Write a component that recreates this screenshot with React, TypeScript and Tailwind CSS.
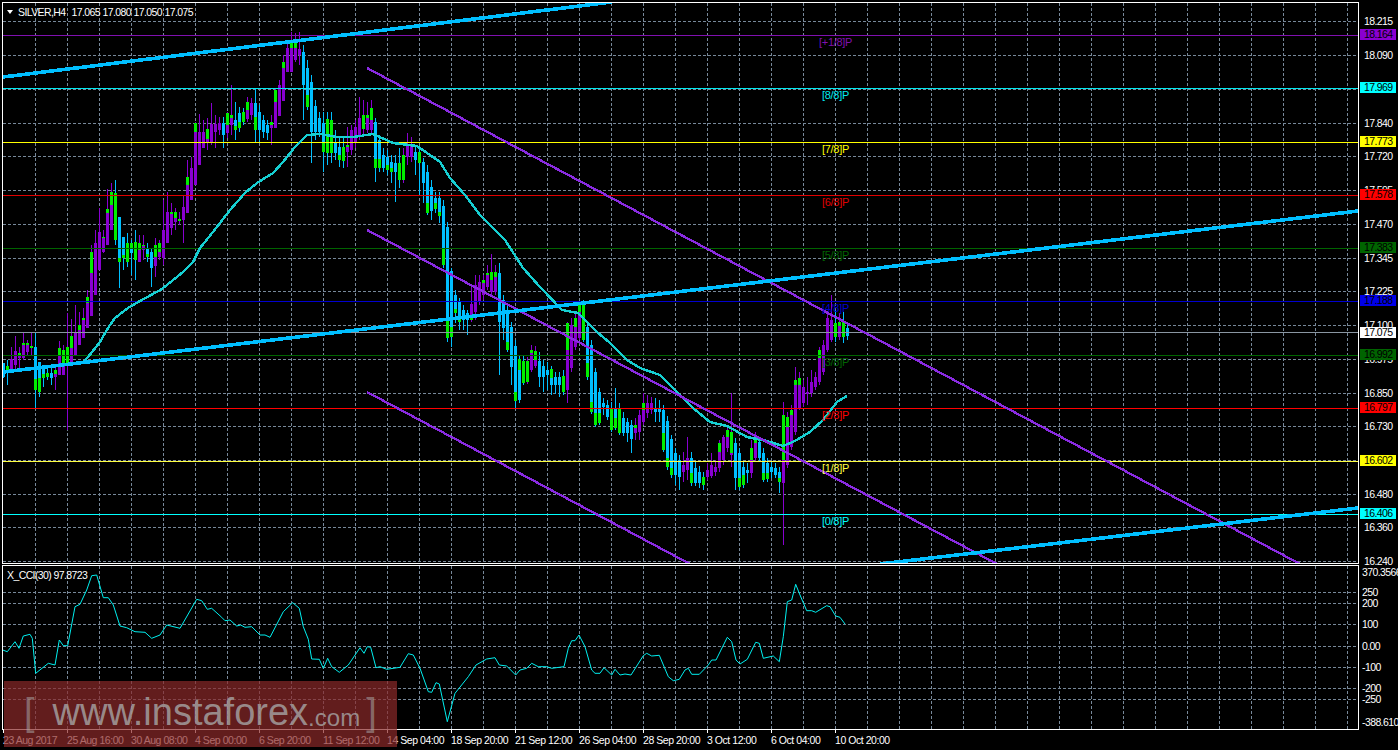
type Candle = [number, 'p' | 'b', number, number, number, number, number?, number?];

// x, colour, high, low, body top, body bottom, green top, green bottom (all in page pixels)
const CANDLES: Candle[] = [
  [3,'b',363,378,363,377],[7,'b',360,385,366,372,366,372],[11,'p',347,372,359,370],[15,'p',336,370,351,365],
  [19,'p',347,368,353,358,353,355],[23,'p',333,360,343,358,343,345],[27,'p',340,355,343,352,343,345],[31,'p',333,355,346,348,346,348],
  [35,'b',333,408,347,390,379,390],[39,'b',362,397,362,392,378,392],[43,'b',367,387,367,378,374,378],[47,'b',365,380,373,377,373,377],
  [51,'b',366,385,373,378],[55,'p',366,390,370,377,370,374],[59,'p',341,375,348,375,348,356],[63,'p',345,375,350,375,350,363],
  [67,'p',313,430,347,365,347,363],[71,'p',319,363,336,363,336,348],[75,'p',305,355,333,355],[79,'p',312,345,325,345,325,330],
  [83,'p',308,338,318,338,318,320],[87,'p',290,328,297,328,297,303],[91,'p',245,316,252,316,252,273],[95,'p',230,295,243,295],
  [99,'p',208,270,232,270],[103,'p',230,253,237,252,237,238],[107,'p',189,245,209,245,209,213],[111,'p',183,230,192,230,192,205],
  [115,'b',180,245,193,240,193,240],[119,'b',217,288,217,262,258,262],[123,'b',237,270,237,258,255,258],[127,'b',233,267,243,262,243,262],
  [131,'b',240,275,243,253,243,248],[135,'b',230,280,242,260,242,260],[139,'p',235,262,243,262,243,250],[143,'p',235,260,245,250,245,246],
  [147,'b',243,262,248,257,254,257],[151,'b',248,287,252,268],[155,'p',238,277,245,266,245,257],[159,'p',240,260,243,257,243,252],
  [163,'p',200,265,230,258],[167,'p',192,243,212,243],[171,'p',203,235,212,228,212,214],[175,'p',208,230,212,222,212,218],
  [179,'p',212,225,219,221,219,221],[183,'p',195,243,207,220],[187,'p',160,213,177,213,177,185],[191,'p',157,200,168,200],
  [195,'p',122,185,123,185,123,132],[199,'p',114,165,132,165],[203,'p',120,148,132,148],[207,'p',118,150,129,142,129,139],
  [211,'p',103,145,124,142],[215,'p',115,148,124,132],[219,'p',117,135,123,130],[223,'b',117,148,123,135],
  [227,'p',112,138,113,133,113,125],[231,'p',85,135,115,125,115,118],[235,'b',102,140,120,130,126,130],[239,'b',107,132,113,128,122,128],
  [243,'b',108,125,112,122,112,122],[247,'p',97,122,102,119,102,110],[251,'p',98,120,103,115],[255,'b',88,142,103,130,117,130],
  [259,'b',105,142,112,130],[263,'b',115,138,120,132],[267,'b',120,140,125,133],[271,'p',115,145,122,128,122,125],
  [275,'p',88,128,90,128,90,102],[279,'p',80,116,85,116],[283,'p',55,101,62,101,62,68],[287,'p',40,72,48,72],
  [291,'p',32,72,40,72,40,48],[295,'p',33,62,40,60,40,48],[299,'p',32,65,49,55],[303,'b',45,120,52,85],
  [307,'b',60,110,68,107,95,107],[311,'b',75,163,82,132],[315,'b',100,140,106,132],[319,'b',112,137,118,132],
  [323,'b',112,172,123,152,143,152],[327,'b',112,165,119,153,119,153],[331,'b',112,163,120,153,120,153],[335,'b',130,160,142,153],
  [339,'b',138,167,147,160,155,160],[343,'b',138,168,147,161,147,161],[347,'p',127,167,145,152,145,147],[351,'p',125,155,130,150],
  [355,'p',120,148,127,143],[359,'p',97,140,118,135],[363,'p',100,135,115,129,115,129],[367,'p',102,133,115,130,115,118],
  [371,'p',100,133,108,130,108,120],[375,'b',118,182,122,168,159,168],[379,'b',135,172,140,168,159,168],[383,'b',148,172,155,168],
  [387,'b',150,175,157,170,165,170],[391,'b',155,183,162,172,168,172],[395,'b',155,202,163,172],[399,'b',148,188,163,180,163,180],
  [403,'p',148,183,155,180,155,180],[407,'p',133,165,145,157],[411,'p',137,162,145,157],[415,'b',145,175,152,160],
  [419,'b',148,195,152,163,152,163],[423,'b',158,203,162,183],[427,'b',165,215,172,213,203,213],[431,'b',180,220,187,211],
  [435,'b',192,213,198,209,203,209],[439,'b',192,223,198,216,212,216],[443,'b',200,268,206,265,248,265],[447,'b',222,342,227,338,317,338],
  [451,'b',268,347,271,337,327,337],[455,'b',290,323,295,313,309,313],[459,'b',298,330,302,322,318,322],[463,'b',305,330,310,320],
  [467,'b',310,335,313,320],[471,'p',287,322,304,320,316,320],[475,'p',275,320,285,312],[479,'p',275,305,282,301],
  [483,'p',275,300,280,295,280,283],[487,'p',265,290,273,287,273,275],[491,'p',254,295,272,292,272,280],[495,'p',265,295,272,292,272,277],
  [499,'b',263,375,273,322],[503,'b',295,340,300,328],[507,'b',305,352,310,350,342,350],[511,'b',322,385,327,367],
  [515,'b',340,408,346,401,392,401],[519,'b',355,403,359,400,359,370],[523,'b',355,385,361,383,361,383],[527,'p',357,384,361,382,361,382],
  [531,'p',345,372,350,370,350,353],[535,'p',346,368,351,366,351,360],[539,'b',352,387,361,377],[543,'b',360,392,366,377],
  [547,'b',362,390,370,375],[551,'b',366,395,369,385,369,378],[555,'b',372,394,377,385],[559,'b',372,397,377,385],
  [563,'b',370,395,376,392,376,392],[567,'p',322,403,323,390,323,350],[571,'p',318,372,325,368],[575,'p',312,350,318,347,318,327],
  [579,'p',302,340,305,338,305,312],[583,'b',300,342,305,340,305,340],[587,'b',322,380,327,377,363,377],[591,'b',340,414,345,412,402,412],
  [595,'b',368,427,372,425,413,425],[599,'b',388,425,392,423,413,423],[603,'b',398,415,403,407],[607,'b',400,420,405,417],
  [611,'b',402,432,408,430,408,430],[615,'b',388,430,408,428,418,428],[619,'b',403,435,408,433,408,433],[623,'b',412,436,418,433],
  [627,'b',418,442,422,433],[631,'b',420,453,425,439],[635,'p',418,440,425,433,425,428],[639,'p',410,440,415,432],
  [643,'p',393,425,403,422,403,410],[647,'p',395,418,403,413],[651,'p',397,414,403,410],[655,'b',398,422,408,412],
  [659,'b',400,422,408,412],[663,'b',405,452,410,450,433,450],[667,'b',416,470,421,467,458,467],[671,'b',435,478,439,475,468,475],
  [675,'b',448,485,453,475],[679,'b',455,490,460,477],[683,'p',452,482,465,472],[687,'p',437,480,458,470],
  [691,'b',452,486,458,483,473,483],[695,'b',462,486,468,483],[699,'b',466,488,472,483],[703,'b',472,490,477,485,477,485],
  [707,'p',463,480,470,477],[711,'p',453,478,465,476],[715,'p',460,476,467,472],[719,'p',440,472,443,468,443,452],
  [723,'p',435,465,437,460],[727,'p',425,452,430,448,430,437],[731,'p',393,467,432,455,432,453],[735,'b',438,490,443,478],
  [739,'b',448,490,453,487,478,487],[743,'b',462,488,467,485,475,485],[747,'b',463,483,470,473],[751,'p',440,478,448,473,448,460],
  [755,'p',432,462,438,458,438,443],[759,'b',437,462,442,458],[763,'b',448,482,453,480,473,480],[767,'b',458,482,463,479,473,479],
  [771,'b',462,478,467,472],[775,'b',463,478,468,475],[779,'b',467,493,472,482,478,482],[783,'p',402,545,415,483,415,460],
  [787,'p',412,468,417,465,417,427],[791,'p',405,450,410,447,410,415],[795,'p',367,435,380,432,380,385],[799,'p',372,410,378,408,378,385],
  [803,'p',380,407,387,403],[807,'p',377,405,392,394],[811,'p',370,397,382,393],[815,'p',372,390,377,387],
  [819,'p',347,385,350,382,350,358],[823,'p',340,375,345,372],[827,'p',312,352,318,350],[831,'p',295,342,320,340],
  [835,'b',310,342,323,337,323,337],[839,'p',313,340,322,337,322,326],[843,'b',312,343,322,337,322,337],[847,'b',322,340,328,336],
];

const GRID_X = Array.from({ length: 42 }, (_, i) => 35 + i * 32);
const GRID_Y = [21, 55, 89, 123, 156, 190, 224, 258, 291, 325, 359, 393, 426, 460, 494, 527, 561];
const CCI_GRID_Y = [592, 603, 624, 646, 667, 688, 699];

const LEVELS = [
  { y: 35, price: '18.164', tag: '[+1/8]P', line: '#8010b0', bg: 'bg-[#8a00d0]', tagX: 819 },
  { y: 88, price: '17.969', tag: '[8/8]P', line: '#00e8f0', bg: 'bg-[#00ffff]', tagX: 822 },
  { y: 142, price: '17.773', tag: '[7/8]P', line: '#ffff00', bg: 'bg-[#ffff00]', tagX: 822 },
  { y: 195, price: '17.578', tag: '[6/8]P', line: '#e00000', bg: 'bg-[#ff0000]', tagX: 822 },
  { y: 248, price: '17.383', tag: '[5/8]P', line: '#006400', bg: 'bg-[#006400]', tagX: 822 },
  { y: 301, price: '17.188', tag: '[4/8]P', line: '#0000d0', bg: 'bg-[#0000e8]', tagX: 822 },
  { y: 355, price: '16.992', tag: '[3/8]P', line: '#006400', bg: 'bg-[#006400]', tagX: 822 },
  { y: 408, price: '16.797', tag: '[2/8]P', line: '#ff0000', bg: 'bg-[#ff0000]', tagX: 822 },
  { y: 461, price: '16.602', tag: '[1/8]P', line: '#ffff40', bg: 'bg-[#ffff00]', tagX: 822 },
  { y: 514, price: '16.406', tag: '[0/8]P', line: '#00ffff', bg: 'bg-[#00ffff]', tagX: 822 },
];

const PRICE_TICKS: [number, string][] = [
  [21, '18.215'], [55, '18.090'], [123, '17.840'], [156, '17.720'], [190, '17.595'], [224, '17.470'],
  [258, '17.345'], [291, '17.225'], [325, '17.100'], [359, '16.975'], [393, '16.850'], [426, '16.730'],
  [494, '16.480'], [527, '16.360'], [561, '16.240'],
];

const CCI_TICKS: [number, string][] = [
  [572, '370.3566'], [592, '250'], [603, '200'], [624, '100'], [646, '0.00'], [667, '-100'], [688, '-200'], [699, '-250'], [722, '-388.610'],
];

const TIME_TICKS: [number, string][] = [
  [3, '23 Aug 2017'], [67, '25 Aug 16:00'], [131, '30 Aug 08:00'], [195, '4 Sep 00:00'], [259, '6 Sep 20:00'],
  [323, '11 Sep 12:00'], [387, '14 Sep 04:00'], [451, '18 Sep 20:00'], [515, '21 Sep 12:00'], [579, '26 Sep 04:00'],
  [643, '28 Sep 20:00'], [707, '3 Oct 12:00'], [771, '6 Oct 04:00'], [835, '10 Oct 20:00'],
];

// moving average, page pixels
const MA = '82,363 88,357 100,342 108,328 115,318 128,308 140,301 162,289 183,272 193,262 200,248 213,232 230,210 245,193 257,183 273,173 283,162 295,147 307,135 320,134 337,137 353,137 373,134 393,143 417,146 430,155 440,162 450,178 465,195 480,215 505,240 523,268 540,287 562,310 578,313 597,332 610,343 627,360 640,368 660,375 673,388 693,408 710,422 727,426 747,437 767,441 783,446 793,442 810,432 823,420 837,402 847,396';

// CCI trace in 3x crop coordinates
const CCI_LEFT = [8,270,22,275,45,245,57,265,70,228,90,223,97,235,107,340,145,310,165,315,178,240,190,257,203,257,225,140,240,133,260,90,275,47,290,45,310,113,325,113,340,135,360,198,380,203,405,215,435,217,455,235,480,225,500,195,540,205,590,118,605,122,622,148,635,145,665,172,675,182,690,180,710,198,722,195,735,202,755,200,780,225,795,225,810,232,850,155,878,128,898,145,910,200,925,238,935,297,958,298,970,325,983,295,995,320,1018,337,1045,315,1080,263,1092,280,1102,260,1112,262,1128,323,1140,320,1160,328,1200,322,1225,281,1240,285,1260,325,1285,395,1295,397,1308,368,1318,372];
const CCI_RIGHT = [22,485,45,400,85,350,108,315,140,297,165,293,178,315,200,318,227,345,240,330,260,325,275,310,295,320,320,320,335,325,372,320,385,265,395,242,405,242,417,225,435,260,455,330,465,340,480,340,492,323,515,345,525,328,540,345,555,342,573,345,610,287,620,280,635,288,658,286,685,350,700,362,718,358,735,330,745,325,755,343,778,343,805,315,815,300,828,300,862,232,875,245,888,300,900,312,922,298,947,247,958,250,970,295,1000,288,1018,305,1030,230,1042,125,1055,120,1067,73,1080,105,1100,152,1115,152,1127,157,1160,137,1170,140,1187,168,1200,172,1215,192];

function cciPoints() {
  const pts: string[] = [];
  for (let i = 0; i < CCI_LEFT.length; i += 2) pts.push(`${(CCI_LEFT[i] / 3).toFixed(1)},${(560 + CCI_LEFT[i + 1] / 3).toFixed(1)}`);
  for (let i = 0; i < CCI_RIGHT.length; i += 2) pts.push(`${(440 + CCI_RIGHT[i] / 3).toFixed(1)},${(560 + CCI_RIGHT[i + 1] / 3).toFixed(1)}`);
  return pts.join(' ');
}

function Grid({ top, bottom, rows }: { top: number; bottom: number; rows: number[] }) {
  return (
    <g stroke="#778899" strokeDasharray="3 2">
      {GRID_X.map(x => <line key={x} x1={x + 0.5} x2={x + 0.5} y1={top} y2={bottom} />)}
      {rows.map(y => <line key={y} x1={3} x2={1358} y1={y + 0.5} y2={y + 0.5} />)}
    </g>
  );
}

function CandleBar({ c }: { c: Candle }) {
  const [x, dir, hi, lo, top, bot, gTop, gBot] = c;
  const fill = dir === 'p' ? '#8800d0' : '#00bfff';
  return (
    <g>
      <rect x={x} y={hi} width={1} height={lo - hi} fill={fill} />
      <rect x={x - 1} y={top} width={3} height={bot - top} fill={fill} />
      {gTop !== undefined && gBot !== undefined && (
        <rect x={x - 1} y={gTop} width={3} height={gBot - gTop} fill="#00ee00" />
      )}
    </g>
  );
}

export default function App() {
  return (
    <div className="relative flex h-[750px] w-[1398px] flex-col overflow-hidden bg-black pl-[2px] pt-[2px] text-[10.5px] leading-none tracking-[-0.6px] text-white font-['Liberation_Sans',sans-serif]">
      {/* price pane */}
      <div className="flex h-[562px] shrink-0">
        <div className="relative h-[562px] w-[1357px] shrink-0 border border-white">
          <svg width={1355} height={560} viewBox="3 3 1355 560" shapeRendering="crispEdges" className="block">
            <Grid top={3} bottom={563} rows={GRID_Y} />
            {CANDLES.map(c => <CandleBar key={c[0]} c={c} />)}
            {LEVELS.map(l => <line key={l.y} x1={3} x2={1358} y1={l.y + 0.5} y2={l.y + 0.5} stroke={l.line} />)}
            <line x1={3} x2={1358} y1={332.5} y2={332.5} stroke="#8a96a2" />
            <polyline points={MA} fill="none" stroke="#16cfd2" strokeWidth={2.4} />
            <g stroke="#8a2be2" strokeWidth={2.3}>
              <line x1={367} y1={68} x2={1300} y2={564} />
              <line x1={367} y1={230} x2={997} y2={564} />
              <line x1={367} y1={392} x2={690} y2={564} />
            </g>
            <g stroke="#00bfff" strokeWidth={3.6}>
              <line x1={3} y1={77} x2={612} y2={2} />
              <line x1={3} y1={372} x2={1358} y2={211} />
              <line x1={880} y1={564} x2={1358} y2={508} />
            </g>
            <g fontSize={11} letterSpacing={-0.3} shapeRendering="auto">
              {LEVELS.map(l => <text key={l.y} x={l.tagX} y={l.y + 11} fill={l.line}>{l.tag}</text>)}
            </g>
          </svg>
          <div className="absolute left-[4px] top-[4px] flex items-center gap-[5px]">
            <span className="h-0 w-0 border-x-[3.5px] border-t-[4px] border-x-transparent border-t-white" />
            <span>SILVER,H4</span>
            <span className="ml-[1px] flex gap-[2.5px]">
              <span>17.065</span><span>17.080</span><span>17.050</span><span>17.075</span>
            </span>
          </div>
        </div>
        <div className="relative grow">
          {PRICE_TICKS.map(([y, t]) => (
            <span key={t} className="absolute left-[5px]" style={{ top: y - 7 }}>{t}</span>
          ))}
          {LEVELS.map(l => (
            <span key={l.y} className={`absolute left-[1px] h-[11px] w-[36px] pl-[4px] leading-[11px] text-black ${l.bg}`} style={{ top: l.y - 8 }}>{l.price}</span>
          ))}
          <span className="absolute left-[1px] top-[325px] h-[11px] w-[36px] bg-white pl-[4px] leading-[11px] text-black">17.075</span>
        </div>
      </div>

      {/* CCI pane */}
      <div className="mt-[1px] flex h-[165px] shrink-0">
        <div className="relative h-[165px] w-[1357px] shrink-0 border border-white">
          <svg width={1355} height={163} viewBox="3 566 1355 163" className="block">
            <g shapeRendering="crispEdges"><Grid top={566} bottom={729} rows={CCI_GRID_Y} /></g>
            <polyline points={cciPoints()} fill="none" stroke="#00f0f0" strokeWidth={1} />
          </svg>
          <span className="absolute left-[4px] top-[4px]">X_CCI(30) 97.8723</span>
        </div>
        <div className="relative grow">
          {CCI_TICKS.map(([y, t]) => (
            <span key={t} className="absolute left-[3px] whitespace-nowrap" style={{ top: y - 570 }}>{t}</span>
          ))}
        </div>
      </div>

      {/* time axis */}
      <div className="relative h-[20px] grow tracking-[-0.45px]">
        {TIME_TICKS.map(([x, t]) => (
          <div key={t} className="absolute top-0" style={{ left: x - 2 }}>
            <span className="block h-[3px] w-px bg-white" />
            <span className="mt-[2px] block whitespace-nowrap">{t}</span>
          </div>
        ))}
      </div>

      {/* watermark */}
      <div className="absolute left-[4px] top-[681px] flex h-[66px] w-[393px] items-center bg-[#8c2a2a]/70 pb-[4px] pl-[20px] font-light tracking-normal text-[#a8a8a8]/80">
        <span className="text-[38px] leading-none text-[#a8a8a8]/55">[</span>
        <span className="ml-[18px] text-[38px] leading-none">www.instaforex</span>
        <span className="mt-[11px] text-[24px] leading-none">.com</span>
        <span className="ml-[6px] text-[38px] leading-none text-[#a8a8a8]/55">]</span>
      </div>
    </div>
  );
}
